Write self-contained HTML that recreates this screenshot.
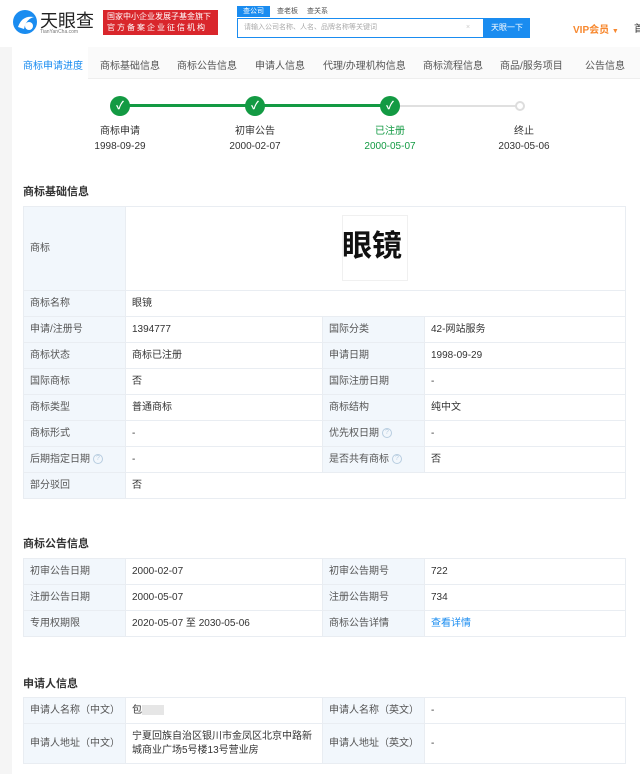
<!DOCTYPE html>
<html><head><meta charset="utf-8"><style>
*{box-sizing:border-box;margin:0;padding:0}
body{width:640px;height:774px;overflow:hidden;background:#f5f5f5;font-family:"Liberation Sans","Noto Sans CJK SC",sans-serif;font-size:10px;color:#333;position:relative}
.abs{position:absolute}
.hdr{left:0;top:0;width:640px;height:47px;background:#fff}
.nav{left:12px;top:47px;width:628px;height:32px;background:#fafafa;border-bottom:1px solid #eee}
.nav span{position:absolute;top:10px;font-size:10px;color:#555;white-space:nowrap}
.main{left:12px;top:79px;width:628px;height:695px;background:#fff}
.circ{width:20px;height:20px;border-radius:50%;background:#139a43;color:#fff;text-align:center;line-height:20px;font-size:11px;font-weight:bold}
.lbl{text-align:center;width:100px;font-size:10px;line-height:15px;color:#333}
.h{font-size:11px;font-weight:bold;color:#333;left:23px}
table{position:absolute;left:23px;width:603px;border-collapse:collapse;font-size:10px}
td{border:1px solid #e9edf2;padding:0 6px;height:26px;color:#333;vertical-align:middle;line-height:14px}
td.k{background:#f2f7fc;width:102px;color:#555}
td.v{width:197px}
.q{display:inline-block;width:10px;height:10px;border:1px solid #b8cde0;border-radius:50%;color:#b8cde0;font-size:7px;line-height:8px;text-align:center;margin-left:3px;vertical-align:middle}
</style></head><body>
<div class="abs hdr">
 <svg class="abs" style="left:12px;top:9px" width="26" height="26" viewBox="0 0 26 26"><circle cx="13" cy="13" r="12" fill="#1a8cf0"/><path d="M6 18 Q10 6 22 8 Q14 10 12 20Z" fill="#fff"/><circle cx="17" cy="17" r="4" fill="#fff"/></svg>
 <div class="abs" style="left:40px;top:7px;font-size:18px;color:#222;letter-spacing:0px">天眼查</div>
 <div class="abs" style="left:40px;top:29px;font-size:5px;color:#777">TianYanCha.com</div>
 <div class="abs" style="left:103px;top:10px;width:115px;height:25px;background:#d9262c;color:#fff;font-size:8px;line-height:11px;padding:1px 4px;white-space:nowrap;overflow:hidden">国家中小企业发展子基金旗下<br><span style="letter-spacing:2px">官方备案企业征信机构</span></div>
 <div class="abs" style="left:237px;top:6px;width:33px;height:11px;background:#1a8cf0;color:#fff;font-size:7px;text-align:center;line-height:11px">查公司</div>
 <div class="abs" style="left:277px;top:6px;font-size:7px;color:#555">查老板</div>
 <div class="abs" style="left:307px;top:6px;font-size:7px;color:#555">查关系</div>
 <div class="abs" style="left:237px;top:18px;width:247px;height:20px;border:1px solid #1a8cf0;font-size:7px;color:#aaa;line-height:18px;padding-left:6px">请输入公司名称、人名、品牌名称等关键词<span style="position:absolute;left:228px;color:#ccc">×</span></div>
 <div class="abs" style="left:484px;top:18px;width:46px;height:20px;background:#1a8cf0;color:#fff;font-size:8px;text-align:center;line-height:20px">天眼一下</div>
 <div class="abs" style="left:573px;top:21px;font-size:10px;font-weight:bold;color:#f7882f">VIP会员 <span style="font-size:7px">▼</span></div>
 <div class="abs" style="left:634px;top:20px;font-size:10px;color:#333">首</div>
</div>
<div class="abs nav">
 <div class="abs" style="left:0;top:0;width:76px;height:32px;background:#fff"></div>
 <span style="left:11px;color:#1a8cf0">商标申请进度</span>
 <span style="left:88px">商标基础信息</span>
 <span style="left:165px">商标公告信息</span>
 <span style="left:243px">申请人信息</span>
 <span style="left:311px">代理/办理机构信息</span>
 <span style="left:411px">商标流程信息</span>
 <span style="left:488px">商品/服务项目</span>
 <span style="left:573px">公告信息</span>
</div>
<div class="abs main"></div>
<div class="abs" style="left:120px;top:104px;width:270px;height:3px;background:#139a43"></div>
<div class="abs" style="left:390px;top:105px;width:130px;height:2px;background:#e0e0e0"></div>
<div class="abs circ" style="left:110px;top:96px">✓</div>
<div class="abs circ" style="left:245px;top:96px">✓</div>
<div class="abs circ" style="left:380px;top:96px">✓</div>
<div class="abs" style="left:515px;top:101px;width:10px;height:10px;border-radius:50%;border:2px solid #ddd;background:#fff"></div>
<div class="abs lbl" style="left:70px;top:124px">商标申请<br>1998-09-29</div>
<div class="abs lbl" style="left:205px;top:124px">初审公告<br>2000-02-07</div>
<div class="abs lbl" style="left:340px;top:124px;color:#139a43">已注册<br>2000-05-07</div>
<div class="abs lbl" style="left:474px;top:124px">终止<br>2030-05-06</div>

<div class="abs h" style="top:183px">商标基础信息</div>
<div class="abs" style="left:342px;top:215px;width:66px;height:66px;border:1px solid #f0f0f0"></div>
<div class="abs" style="left:342px;top:227px;font-size:30px;font-weight:bold;color:#111;line-height:40px">眼镜</div>
<table style="top:206px">
<tr><td class="k" style="height:84px">商标</td><td colspan="3"></td></tr>
<tr><td class="k">商标名称</td><td colspan="3">眼镜</td></tr>
<tr><td class="k">申请/注册号</td><td class="v">1394777</td><td class="k">国际分类</td><td>42-网站服务</td></tr>
<tr><td class="k">商标状态</td><td class="v">商标已注册</td><td class="k">申请日期</td><td>1998-09-29</td></tr>
<tr><td class="k">国际商标</td><td class="v">否</td><td class="k">国际注册日期</td><td>-</td></tr>
<tr><td class="k">商标类型</td><td class="v">普通商标</td><td class="k">商标结构</td><td>纯中文</td></tr>
<tr><td class="k">商标形式</td><td class="v">-</td><td class="k">优先权日期<span class="q">?</span></td><td>-</td></tr>
<tr><td class="k">后期指定日期<span class="q">?</span></td><td class="v">-</td><td class="k">是否共有商标<span class="q">?</span></td><td>否</td></tr>
<tr><td class="k">部分驳回</td><td colspan="3">否</td></tr>
</table>

<div class="abs h" style="top:535px">商标公告信息</div>
<table style="top:558px">
<tr><td class="k">初审公告日期</td><td class="v">2000-02-07</td><td class="k">初审公告期号</td><td>722</td></tr>
<tr><td class="k">注册公告日期</td><td class="v">2000-05-07</td><td class="k">注册公告期号</td><td>734</td></tr>
<tr><td class="k">专用权期限</td><td class="v">2020-05-07 至 2030-05-06</td><td class="k">商标公告详情</td><td style="color:#1a8cf0">查看详情</td></tr>
</table>

<div class="abs h" style="top:675px">申请人信息</div>
<table style="top:697px">
<tr><td class="k">申请人名称（中文）</td><td class="v">包<span style="display:inline-block;width:22px;height:10px;background:#e6e6e6;vertical-align:middle"></span></td><td class="k">申请人名称（英文）</td><td>-</td></tr>
<tr><td class="k" style="height:40px">申请人地址（中文）</td><td class="v">宁夏回族自治区银川市金凤区北京中路新城商业广场5号楼13号营业房</td><td class="k">申请人地址（英文）</td><td>-</td></tr>
</table>
</body></html>
